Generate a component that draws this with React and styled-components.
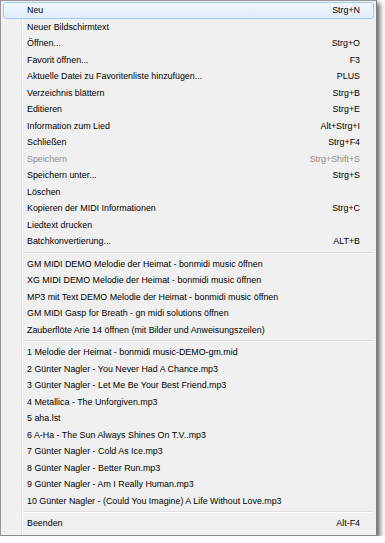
import React from "react";
import styled, { createGlobalStyle } from "styled-components";

const GlobalStyle = createGlobalStyle`
  html, body { margin: 0; padding: 0; background: #ffffff; }
  body { font-family: "Liberation Sans", Arial, sans-serif; }
`;

const Menu = styled.div`
  box-sizing: border-box;
  width: 377px;
  padding: 1px 2px 3px 2px;
  border: 1px solid #979797;
  border-right-color: #7e7e7e;
  border-bottom-color: #8a8a8a;
  background:
    linear-gradient(
      to right,
      transparent 20px,
      #e2e3e3 20px,
      #e2e3e3 21px,
      #ffffff 21px,
      #ffffff 22px,
      transparent 22px
    ),
    #f0f0f0;
  box-shadow: 3px 3px 5px rgba(0, 0, 0, 0.6);
  font-family: "Liberation Sans", Arial, sans-serif;
  font-size: 8.9px;
  color: #000000;
`;

const Item = styled.div`
  box-sizing: border-box;
  height: 16.5px;
  display: flex;
  align-items: center;
  justify-content: space-between;
  padding: 0 13px 0 23px;
  border: 1px solid ${(p) => (p.$active ? "#aac8ec" : "transparent")};
  border-radius: 3px;
  background: ${(p) =>
    p.$active ? "linear-gradient(#f1f6fd, #e1ecfa)" : "transparent"};
  color: ${(p) => (p.$disabled ? "#8d8d8d" : "#000000")};
  white-space: nowrap;
`;

const Label = styled.span``;

const Shortcut = styled.span`
  margin-left: 24px;
`;

const Separator = styled.div`
  height: 0;
  margin: 2px 1px 2px 20px;
  border-top: 1px solid #e0e0e0;
  border-bottom: 1px solid #ffffff;
`;

const main = [
  ["Neu", "Strg+N", { active: true }],
  ["Neuer Bildschirmtext", ""],
  ["Öffnen...", "Strg+O"],
  ["Favorit öffnen...", "F3"],
  ["Aktuelle Datei zu Favoritenliste hinzufügen...", "PLUS"],
  ["Verzeichnis blättern", "Strg+B"],
  ["Editieren", "Strg+E"],
  ["Information zum Lied", "Alt+Strg+I"],
  ["Schließen", "Strg+F4"],
  ["Speichern", "Strg+Shift+S", { disabled: true }],
  ["Speichern unter...", "Strg+S"],
  ["Löschen", ""],
  ["Kopieren der MIDI Informationen", "Strg+C"],
  ["Liedtext drucken", ""],
  ["Batchkonvertierung...", "ALT+B"],
];

const demos = [
  "GM MIDI DEMO Melodie der Heimat - bonmidi music öffnen",
  "XG MIDI DEMO Melodie der Heimat - bonmidi music öffnen",
  "MP3 mit Text DEMO Melodie der Heimat - bonmidi music öffnen",
  "GM MIDI Gasp for Breath - gn midi solutions öffnen",
  "Zauberflöte Arie 14 öffnen (mit Bilder und Anweisungszeilen)",
];

const recent = [
  "1 Melodie der Heimat - bonmidi music-DEMO-gm.mid",
  "2 Günter Nagler - You Never Had A Chance.mp3",
  "3 Günter Nagler - Let Me Be Your Best Friend.mp3",
  "4 Metallica - The Unforgiven.mp3",
  "5 aha.lst",
  "6 A-Ha - The Sun Always Shines On T.V..mp3",
  "7 Günter Nagler - Cold As Ice.mp3",
  "8 Günter Nagler - Better Run.mp3",
  "9 Günter Nagler - Am I Really Human.mp3",
  "10 Günter Nagler - (Could You Imagine) A Life Without Love.mp3",
];

export default function App() {
  return (
    <>
      <GlobalStyle />
      <Menu>
        {main.map(([label, sc, opt = {}]) => (
          <Item key={label} $active={opt.active} $disabled={opt.disabled}>
            <Label>{label}</Label>
            {sc && <Shortcut>{sc}</Shortcut>}
          </Item>
        ))}
        <Separator />
        {demos.map((label) => (
          <Item key={label}>
            <Label>{label}</Label>
          </Item>
        ))}
        <Separator />
        {recent.map((label) => (
          <Item key={label}>
            <Label>{label}</Label>
          </Item>
        ))}
        <Separator />
        <Item>
          <Label>Beenden</Label>
          <Shortcut>Alt-F4</Shortcut>
        </Item>
      </Menu>
    </>
  );
}
